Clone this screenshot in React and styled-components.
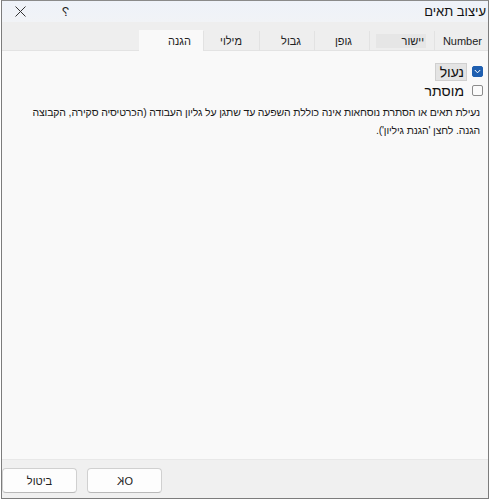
import React from "react";
import styled, { createGlobalStyle } from "styled-components";

const Global = createGlobalStyle`
  html, body { margin: 0; padding: 0; background: #ffffff; }
  body { font-family: "Liberation Sans", "DejaVu Sans", sans-serif; }
`;

const Window = styled.div`
  box-sizing: border-box;
  width: 488px;
  height: 499px;
  margin-left: 1px;
  border: 1px solid #7c7c7c;
  border-top-color: #8a8a8a;
  display: flex;
  flex-direction: column;
  direction: rtl;
  background: #f9f9f9;
  color: #1b1b1b;
`;

const TitleBar = styled.div`
  height: 21px;
  display: flex;
  align-items: center;
  background: linear-gradient(#eef2f9, #f1f3f6);
`;

const Title = styled.div`
  font-size: 13px;
  padding-right: 2px;
  color: #111;
`;

const TitleButton = styled.div`
  width: ${(p) => p.$w}px;
  height: 21px;
  display: flex;
  align-items: center;
  justify-content: center;
  margin-right: ${(p) => (p.$auto ? "auto" : "0")};
  font-size: 13px;
  color: #222;
`;

const Mirrored = styled.span`
  display: inline-block;
  transform: scaleX(-1);
`;

const TabStrip = styled.div`
  height: 29px;
  display: flex;
  align-items: flex-end;
  background: #eeeeee;
  border-bottom: 1px solid #e3e3e3;
  box-sizing: border-box;
`;

const Tab = styled.div`
  box-sizing: border-box;
  width: ${(p) => p.$w}px;
  margin-bottom: -1px;
  display: flex;
  align-items: center;
  justify-content: flex-start;
  padding-right: ${(p) => p.$pr || 0}px;
  font-size: 11px;
  color: #222;
  border-left: 1px solid ${(p) => (p.$active ? "#f9f9f9" : "#e2e2e2")};
  background: ${(p) => (p.$active ? "#f9f9f9" : "transparent")};
  height: ${(p) => (p.$active ? 21 : 20)}px;
`;

const LatinTab = styled(Tab)`
  direction: ltr;
  justify-content: flex-end;
`;

const TabLabel = styled.span`
  background: ${(p) => (p.$shade ? "#e6e6e6" : "transparent")};
  padding: ${(p) => (p.$shade ? "1px 2px 1px 26px" : "0")};
`;

const Content = styled.div`
  flex: 1;
  padding: 11px 5px 0 0;
  display: flex;
  flex-direction: column;
`;

const CheckRow = styled.label`
  display: flex;
  align-items: center;
  gap: 5px;
  height: 19px;
  font-size: 14px;
  color: #111;
`;

const Box = styled.span`
  box-sizing: border-box;
  width: 11px;
  height: 11px;
  border-radius: 2px;
  display: inline-flex;
  align-items: center;
  justify-content: center;
  background: ${(p) => (p.$on ? "#1f5fb0" : "#fbfbfb")};
  border: 1px solid ${(p) => (p.$on ? "#1f5fb0" : "#8c8c8c")};
`;

const LabelText = styled.span`
  background: ${(p) => (p.$shade ? "#e4e4e4" : "transparent")};
  border: 1px solid ${(p) => (p.$shade ? "#d0d0d0" : "transparent")};
  padding: 0 2px 0 4px;
  line-height: 16px;
`;

const Note = styled.p`
  margin: 3px 3px 0 0;
  font-size: 10.5px;
  letter-spacing: -0.15px;
  line-height: 18px;
  white-space: nowrap;
  color: #1b1b1b;
`;

const Footer = styled.div`
  height: 39px;
  box-sizing: border-box;
  background: #f0f0f0;
  border-top: 1px solid #e8e8e8;
  display: flex;
  justify-content: flex-end;
  align-items: flex-start;
  padding-top: 8px;
  gap: 10px;
`;

const Button = styled.button`
  box-sizing: border-box;
  width: 75px;
  height: 25px;
  background: #fdfdfd;
  border: 1px solid #d0d0d0;
  border-bottom-color: #b8b8b8;
  border-radius: 4px;
  font-family: "Liberation Sans", "DejaVu Sans", sans-serif;
  font-size: 11px;
  color: #222;
  padding: 0;
`;

function Check() {
  return (
    <svg width="7" height="5" viewBox="0 0 7 5">
      <path d="M0.8 1 L3.5 3.8 L6.2 1" fill="none" stroke="#fff" strokeWidth="1" />
    </svg>
  );
}

function Close() {
  return (
    <svg width="11" height="11" viewBox="0 0 11 11">
      <path d="M0.5 0.5 L10.5 10.5 M10.5 0.5 L0.5 10.5" stroke="#333" strokeWidth="1" />
    </svg>
  );
}

export default function App() {
  return (
    <>
      <Global />
      <Window>
        <TitleBar>
          <Title>עיצוב תאים</Title>
          <TitleButton $w={54} $auto>
            <Mirrored>?</Mirrored>
          </TitleButton>
          <TitleButton $w={37}>
            <Close />
          </TitleButton>
        </TitleBar>
        <TabStrip>
          <LatinTab $w={54}>
            <span style={{ paddingRight: 6 }}>Number</span>
          </LatinTab>
          <Tab $w={65} $pr={8}>
            <TabLabel $shade>יישור</TabLabel>
          </Tab>
          <Tab $w={55} $pr={17}>גופן</Tab>
          <Tab $w={55} $pr={13}>גבול</Tab>
          <Tab $w={56} $pr={17}>מילוי</Tab>
          <Tab $w={64} $pr={12} $active>הגנה</Tab>
        </TabStrip>
        <Content>
          <CheckRow>
            <Box $on>
              <Check />
            </Box>
            <LabelText $shade>נעול</LabelText>
          </CheckRow>
          <CheckRow>
            <Box />
            <LabelText>מוסתר</LabelText>
          </CheckRow>
          <Note>
            נעילת תאים או הסתרת נוסחאות אינה כוללת השפעה עד שתגן על גליון העבודה (הכרטיסיה סקירה, הקבוצה
            <br />
            הגנה. לחצן 'הגנת גיליון').
          </Note>
        </Content>
        <Footer>
          <Button>
            <Mirrored>OK</Mirrored>
          </Button>
          <Button>ביטול</Button>
        </Footer>
      </Window>
    </>
  );
}
